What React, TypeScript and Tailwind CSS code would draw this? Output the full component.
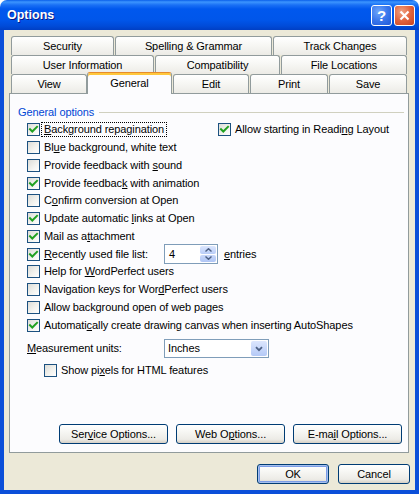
import React from "react";

const FONT = "font-[family-name:'Liberation_Sans',Arial,sans-serif]";

// Text with one underlined access-key character
function Mn({ t, i }: { t: string; i: number }) {
  if (i < 0) return <>{t}</>;
  return (
    <>
      {t.slice(0, i)}
      <span className="underline underline-offset-[1px]">{t[i]}</span>
      {t.slice(i + 1)}
    </>
  );
}

function Check({ on }: { on: boolean }) {
  return (
    <span className="w-[13px] h-[13px] shrink-0 border border-[#1C5180] bg-[linear-gradient(135deg,#DCDCD7_0%,#F2F2EE_55%,#FFFFFF_100%)] flex items-center justify-center">
      {on && (
        <svg width="11" height="11" viewBox="0 0 11 11">
          <path d="M2 5.2 L4.3 7.5 L9 2.8" fill="none" stroke="#21A121" strokeWidth="2" strokeLinecap="square" />
        </svg>
      )}
    </span>
  );
}

function Box({ on, t, i, focus }: { on: boolean; t: string; i: number; focus?: boolean }) {
  return (
    <span className="flex items-center">
      <Check on={on} />
      <span
        className={
          "ml-[1px] px-[2px] leading-[13px] border whitespace-nowrap " +
          (focus ? "border-dotted border-black" : "border-transparent")
        }
      >
        <Mn t={t} i={i} />
      </span>
    </span>
  );
}

function Row({ children, className = "" }: { children: React.ReactNode; className?: string }) {
  return <div className={"h-[17.75px] flex items-center pl-[17px] " + className}>{children}</div>;
}

function Tab({ w, label, sel }: { w: number; label: string; sel?: boolean }) {
  if (sel) {
    return (
      <div
        style={{ width: w }}
        className="relative z-10 h-[22px] -mb-px self-end rounded-t-[3px] border-x border-t border-x-[#919B9C] border-t-[#E68B2C] bg-[#FCFCFE] shadow-[inset_0_2px_0_#FFC73C] flex items-center justify-center pb-[1px]"
      >
        {label}
      </div>
    );
  }
  return (
    <div
      style={{ width: w }}
      className="h-[19px] rounded-t-[3px] border-x border-t border-[#919B9C] bg-[linear-gradient(to_bottom,#FFFFFF_0%,#F7F7F4_45%,#ECEBE6_100%)] flex items-center justify-center"
    >
      {label}
    </div>
  );
}

function Btn({ w, t, i, def }: { w: number; t: string; i: number; def?: boolean }) {
  return (
    <div
      style={{ width: w }}
      className={
        "h-[20px] rounded-[3px] border border-[#003C74] bg-[linear-gradient(to_bottom,#FFFFFF_0%,#F5F5F1_45%,#ECEBE6_80%,#D6D0C5_100%)] flex items-center justify-center " +
        (def ? "shadow-[inset_0_0_0_1px_#A6C0EE,inset_0_0_0_2px_#7B9CE6]" : "")
      }
    >
      <span>
        <Mn t={t} i={i} />
      </span>
    </div>
  );
}

function Spin() {
  return (
    <div className="w-[54px] h-[20px] border border-[#7F9DB9] bg-white flex items-stretch">
      <span className="flex-1 pl-[4px] leading-[18px]">4</span>
      <div className="w-[16px] my-[1px] mr-[1px] flex flex-col gap-[1px]">
        <div className="flex-1 rounded-[2px] bg-[linear-gradient(to_bottom,#DCE6FD,#B9CDF8)] flex items-center justify-center">
          <svg width="7" height="4" viewBox="0 0 7 4">
            <path d="M0.5 3.5 L3.5 0.7 L6.5 3.5" fill="none" stroke="#4D6185" strokeWidth="1.4" />
          </svg>
        </div>
        <div className="flex-1 rounded-[2px] bg-[linear-gradient(to_bottom,#C9D8FA,#AFC5F5)] flex items-center justify-center">
          <svg width="7" height="4" viewBox="0 0 7 4">
            <path d="M0.5 0.5 L3.5 3.3 L6.5 0.5" fill="none" stroke="#4D6185" strokeWidth="1.4" />
          </svg>
        </div>
      </div>
    </div>
  );
}

function Combo() {
  return (
    <div className="w-[105px] h-[19px] border border-[#7F9DB9] bg-white flex items-stretch">
      <span className="flex-1 pl-[3px] leading-[17px]">Inches</span>
      <div className="w-[16px] m-[1px] rounded-[2px] bg-[linear-gradient(to_bottom,#DCE6FD,#B4C9F7)] flex items-center justify-center">
        <svg width="8" height="6" viewBox="0 0 8 6">
          <path d="M1 1.2 L4 4.2 L7 1.2" fill="none" stroke="#4D6185" strokeWidth="1.8" />
        </svg>
      </div>
    </div>
  );
}

export default function App() {
  return (
    <div className={"w-[419px] h-[494px] text-[11px] tracking-[-0.1px] text-black flex flex-col bg-white " + FONT}>
      {/* caption */}
      <div className="h-[30px] shrink-0 rounded-t-[7px] bg-[linear-gradient(to_bottom,#0A5FEA_0px,#3C95FE_2px,#1A70F5_5px,#0058EE_9px,#0056EA_20px,#004BD8_26px,#003FC4_30px)] flex items-center pl-[7px] pr-[4px]">
        <span className="text-white font-bold text-[12.5px] tracking-[0px] [text-shadow:1px_1px_0_#0A1883]">
          Options
        </span>
        <div className="ml-auto flex gap-[2px]">
          <div className="w-[21px] h-[21px] rounded-[3px] border border-white bg-[radial-gradient(circle_at_35%_30%,#6FA6FA_0%,#3A77EC_50%,#1F58D8_100%)] flex items-center justify-center">
            <span className="text-white font-bold text-[15px] leading-none">?</span>
          </div>
          <div className="w-[21px] h-[21px] rounded-[3px] border border-white bg-[radial-gradient(circle_at_35%_30%,#F0A283_0%,#E2643E_50%,#C8411F_100%)] flex items-center justify-center">
            <svg width="11" height="11" viewBox="0 0 11 11">
              <path d="M1.5 1.5 L9.5 9.5 M9.5 1.5 L1.5 9.5" stroke="white" strokeWidth="2.2" />
            </svg>
          </div>
        </div>
      </div>

      {/* client area */}
      <div className="flex-1 flex flex-col bg-[#ECE9D8] border-x-4 border-b-4 border-[#0B4FD9] pl-[5px] pr-[6px] pt-[6px]">
        {/* tab rows */}
        <div className="px-[2px] flex flex-col">
          <div className="h-[19px] flex gap-[1px]">
            <Tab w={103} label="Security" />
            <Tab w={157} label="Spelling & Grammar" />
            <Tab w={134} label="Track Changes" />
          </div>
          <div className="h-[19px] flex gap-[1px]">
            <Tab w={143} label="User Information" />
            <Tab w={125} label="Compatibility" />
            <Tab w={126} label="File Locations" />
          </div>
          <div className="h-[19px] flex items-end">
            <Tab w={76} label="View" />
            <Tab w={85} label="General" sel />
            <div className="flex gap-[1px] ml-[1px]">
              <Tab w={76} label="Edit" />
              <Tab w={78} label="Print" />
              <Tab w={78} label="Save" />
            </div>
          </div>
        </div>

        {/* page */}
        <div className="h-[360px] border border-[#919B9C] bg-[#FCFCFE] flex flex-col">
          <div className="mt-[12px] h-[13px] flex items-center pl-[8px] pr-[4px]">
            <span className="text-[#0046D5] leading-[13px]">General options</span>
            <span className="flex-1 h-px bg-[#D0D0BF] ml-[5px]" />
          </div>

          <div className="mt-[2px] flex flex-col">
            <Row>
              <div className="w-[191px] shrink-0">
                <Box on t="Background repagination" i={0} focus />
              </div>
              <Box on t="Allow starting in Reading Layout" i={23} />
            </Row>
            <Row><Box on={false} t="Blue background, white text" i={2} /></Row>
            <Row><Box on={false} t="Provide feedback with sound" i={22} /></Row>
            <Row><Box on t="Provide feedback with animation" i={15} /></Row>
            <Row><Box on={false} t="Confirm conversion at Open" i={1} /></Row>
            <Row><Box on t="Update automatic links at Open" i={17} /></Row>
            <Row><Box on t="Mail as attachment" i={9} /></Row>
            <Row>
              <div className="w-[137px] shrink-0">
                <Box on t="Recently used file list:" i={0} />
              </div>
              <Spin />
              <span className="ml-[6px]">
                <Mn t="entries" i={0} />
              </span>
            </Row>
            <Row><Box on={false} t="Help for WordPerfect users" i={9} /></Row>
            <Row><Box on={false} t="Navigation keys for WordPerfect users" i={23} /></Row>
            <Row><Box on={false} t="Allow background open of web pages" i={10} /></Row>
            <Row><Box on t="Automatically create drawing canvas when inserting AutoShapes" i={8} /></Row>
          </div>

          <div className="mt-[5px] h-[19px] flex items-center pl-[17px]">
            <span className="w-[137px] shrink-0">
              <Mn t="Measurement units:" i={0} />
            </span>
            <Combo />
          </div>

          <div className="mt-[4px] h-[17.75px] flex items-center pl-[34px]">
            <Box on={false} t="Show pixels for HTML features" i={7} />
          </div>

          <div className="mt-auto pb-[8px] pr-[6px] flex justify-end gap-[8px]">
            <Btn w={109} t="Service Options..." i={3} />
            <Btn w={109} t="Web Options..." i={5} />
            <Btn w={109} t="E-mail Options..." i={4} />
          </div>
        </div>

        {/* dialog buttons */}
        <div className="mt-[11px] -mr-[1px] flex justify-end gap-[9px]">
          <Btn w={72} t="OK" i={-1} def />
          <Btn w={72} t="Cancel" i={-1} />
        </div>
      </div>
    </div>
  );
}
